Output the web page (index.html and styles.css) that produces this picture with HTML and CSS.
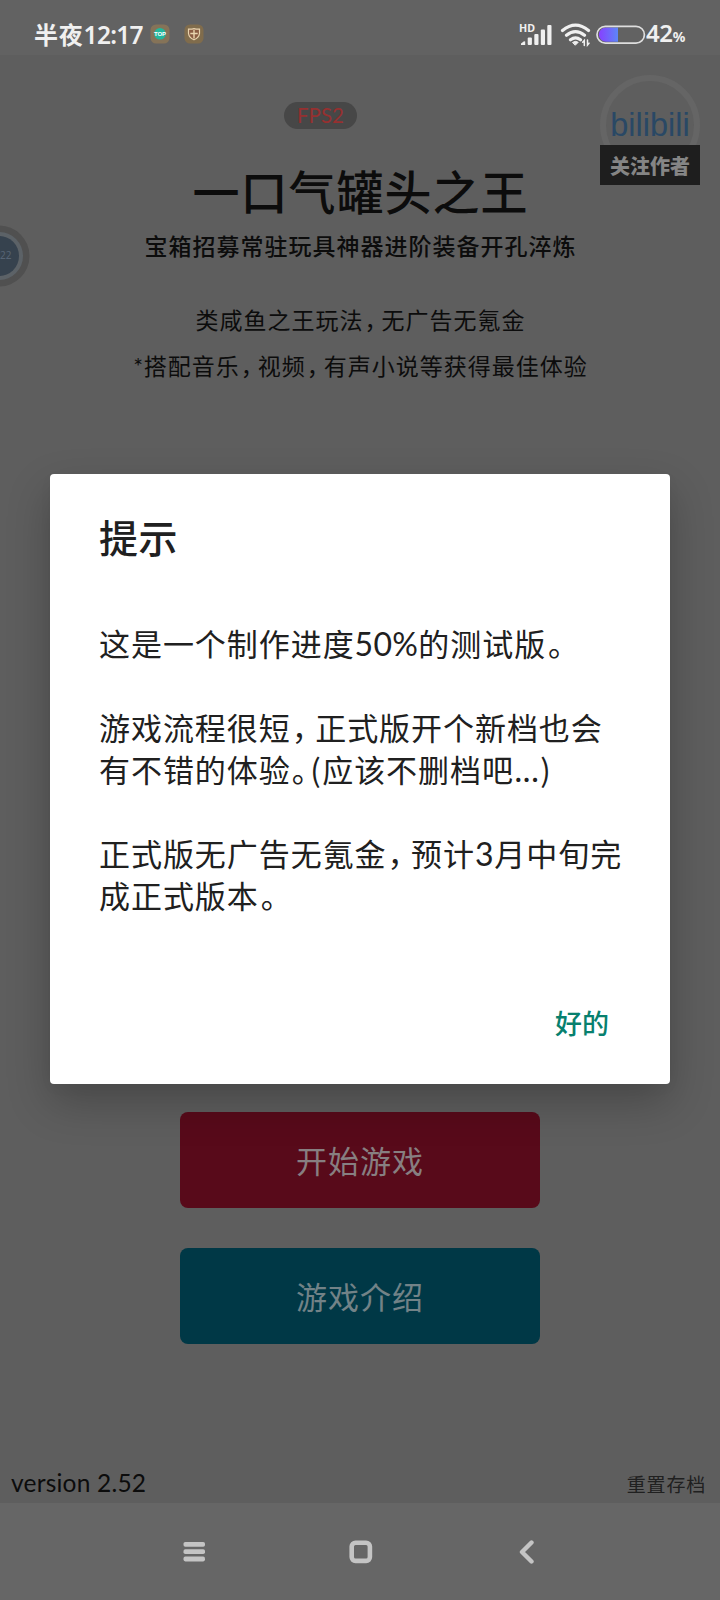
FILE: index.html
```html
<!DOCTYPE html>
<html lang="zh-CN">
<head>
<meta charset="utf-8">
<title>一口气罐头之王</title>
<link rel="stylesheet" href="styles.css">
</head>
<body>
<div class="screen">
  <header class="status">
    <span class="clock"><span class="clock-cjk">半夜</span><span class="clock-num">12:17</span></span>
    <svg class="app-icon" width="20" height="20" viewBox="0 0 20 20"><rect x=".5" y=".5" width="19" height="19" rx="5.5" fill="#857358"/><circle cx="10" cy="9.8" r="5.8" fill="#22b89c"/><text x="10" y="12.3" class="top-text" text-anchor="middle">TOP</text></svg>
    <svg class="app-icon second" width="20" height="20" viewBox="0 0 20 20"><rect x=".5" y=".5" width="19" height="19" rx="5.5" fill="#806c4c"/><path d="M4.5 5.2Q8 5.3 10 4.6Q12 5.3 15.5 5.2V9.5Q15 13.6 10 15.8Q5 13.6 4.5 9.5Z" fill="#8a5c42" stroke="#e8d3ae" stroke-width="1.2"/><path d="M10 6V14.5M6.3 9.5H13.7" stroke="#e8d3ae" stroke-width="1.4"/></svg>
    <span class="spacer"></span>
    <svg class="signal" width="34" height="28" viewBox="0 -4 34 28"><text x="0" y="9" class="hd-text" textLength="16" lengthAdjust="spacingAndGlyphs">HD</text><g fill="#f0f0f0"><path d="M2 22V20.5L5 18.2L6.2 18.5V22Z"/><rect x="8.7" y="14.5" width="4.2" height="7.5" rx="1"/><rect x="15.3" y="11" width="4.2" height="11" rx="1"/><rect x="21.8" y="6.5" width="4.2" height="15.5" rx="1"/><rect x="28.3" y="2" width="4.2" height="20" rx="1"/></g></svg>
    <svg class="wifi" width="32" height="24" viewBox="0 0 32 24" fill="none" stroke="#f0f0f0" stroke-width="3.2" stroke-linecap="round"><path d="M2.5 7.5Q15.5-3.2 28.5 7.5M6.5 12.3Q15.5 5 24.5 12.3M10.5 16.8Q15.5 13 20.5 16.8"/><path d="M12.8 19.3Q15.5 17.3 18.2 19.3L15.5 22Z" fill="#f0f0f0" stroke-width="1"/><path d="M24.3 22.5V17.5L22.7 19.3M27.5 17V22L29 20.2" stroke-width="1.5"/></svg>
    <svg class="battery" width="50" height="20" viewBox="0 0 50 20"><defs><linearGradient id="charge"><stop offset="0" stop-color="#8740ff"/><stop offset="1" stop-color="#5d86f8"/></linearGradient></defs><path d="M22 2.5H10A7 7 0 0 0 10 16.8H22Z" fill="url(#charge)"/><rect x="1" y="1.3" width="47.4" height="16.8" rx="8.4" fill="none" stroke="#dedede" stroke-width="1.7"/></svg>
    <span class="level">42<small>%</small></span>
  </header>

  <main class="game">
    <div class="fps">FPS2</div>
    <h1 class="title">一口气罐头之王</h1>
    <p class="subtitle">宝箱招募常驻玩具神器进阶装备开孔淬炼</p>
    <p class="note">类咸鱼之王玩法<i class="comma">，</i>无广告无氪金</p>
    <p class="note second-note"><i class="star">*</i>搭配音乐<i class="comma">，</i>视频<i class="comma">，</i>有声小说等获得最佳体验</p>
    <div class="actions">
      <div class="button start">开始游戏</div>
      <div class="button intro">游戏介绍</div>
    </div>
    <footer class="foot"><span class="version">version 2.52</span><span class="reset">重置存档</span></footer>

    <div class="author"><div class="author-logo">bilibili</div><div class="author-label">关注作者</div></div>
    <svg class="bubble" width="30" height="62" viewBox="0 0 30 62"><circle cx="-1" cy="31" r="30.5" fill="#505050"/><circle cx="-1" cy="31" r="24" fill="#5c6267"/><circle cx="-1" cy="31" r="20" fill="#36424e"/><text x="0" y="34" class="bubble-text">22</text></svg>
  </main>

  <nav class="nav">
    <svg width="24" height="24" viewBox="0 0 24 24" fill="#c4c4c4"><rect x="1.5" y="2" width="21.5" height="4.8" rx="1.8"/><rect x="1.5" y="9.2" width="21.5" height="4.8" rx="1.8"/><rect x="1.5" y="16.6" width="21.5" height="4.8" rx="1.8"/></svg>
    <svg width="24" height="24" viewBox="0 0 24 24"><rect x="2.7" y="2.7" width="18.2" height="18.2" rx="3.8" fill="none" stroke="#c4c4c4" stroke-width="4.6"/></svg>
    <svg width="24" height="24" viewBox="0 0 24 24"><path d="M15.5 2.5L6 12L15.5 21.5" fill="none" stroke="#c4c4c4" stroke-width="4.4" stroke-linecap="round" stroke-linejoin="round"/></svg>
  </nav>

  <section class="dialog">
    <h2 class="dialog-title">提示</h2>
    <div class="dialog-body">
      <p>这是一个制作进度<span class="num fifty">50%</span>的测试版<i class="last-stop">。</i></p>
      <p>游戏流程很短<i class="comma">，</i>正式版开个新档也会<br>有不错的体验<i class="stop">。</i><span class="paren">(</span>应该不删档吧<span class="dots">...</span><span class="paren">)</span></p>
      <p>正式版无广告无氪金<i class="comma">，</i>预计<span class="num three">3</span>月中旬完<br>成正式版本<i class="last-stop">。</i></p>
    </div>
    <div class="dialog-ok">好的</div>
  </section>
</div>
</body>
</html>
```
FILE: styles.css
```css
* { box-sizing: border-box; }
body {
  margin: 0;
  font-family: "Noto Sans CJK SC", sans-serif;
}
h1, h2, p { margin: 0; font-weight: 400; }
i { font-style: normal; }
svg { display: block; flex: none; }

.screen {
  position: relative;
  display: flex;
  flex-direction: column;
  width: 720px;
  height: 1600px;
  overflow: hidden;
  background: #5e5e5e;
}

/* status bar */
.status {
  display: flex;
  align-items: center;
  height: 55px;
  padding: 14px 33px 0 34px;
  background: #626262;
  color: #f0f0f0;
}
.clock { display: flex; align-items: baseline; width: 116px; white-space: nowrap; line-height: 30px; }
.clock-cjk { font-size: 24px; font-weight: 700; letter-spacing: .8px; }
.clock-num { font-family: "Noto Sans", sans-serif; font-size: 24.5px; font-weight: 600; letter-spacing: -.7px; }
.app-icon { margin-top: -1px; }
.second { margin-left: 14px; }
.top-text { font: 700 6px "Liberation Sans", sans-serif; fill: #fff; }
.spacer { flex: 1; }
.signal { margin-top: -4px; }
.hd-text { font: 700 10.5px "Noto Sans", sans-serif; fill: #f0f0f0; }
.wifi { margin-left: 7px; }
.battery { margin-left: 4px; }
.level { font-family: "Noto Sans", sans-serif; font-size: 24px; font-weight: 600; line-height: 30px; white-space: nowrap; letter-spacing: -.4px; width: 41px; }
.level small { font-size: 14px; font-weight: 700; }

/* game page */
.game {
  position: relative;
  flex: 1;
  display: flex;
  flex-direction: column;
  align-items: center;
  color: #0c0c0c;
}
.fps {
  width: 73px;
  height: 27px;
  margin: 47px 79px 0 0;
  border-radius: 14px;
  background: #474747;
  color: #963030;
  font: 20.5px/26px Lato, sans-serif;
  text-align: center;
}
.title {
  margin-top: 26px;
  padding-left: 1px;
  font-size: 47px;
  line-height: 70px;
  font-weight: 500;
  letter-spacing: 1px;
}
.subtitle {
  margin-top: 4px;
  padding-left: 1px;
  font-size: 23px;
  line-height: 32px;
  font-weight: 500;
  letter-spacing: 1px;
}
.note {
  margin-top: 42px;
  padding-left: 1px;
  font-size: 23px;
  line-height: 32px;
  letter-spacing: 1px;
  white-space: nowrap;
}
.note .comma { margin-left: 1px; letter-spacing: -6px; }
.star { font-family: Lato, sans-serif; letter-spacing: .6px; }
.second-note { margin-top: 14px; }
.actions {
  display: flex;
  flex-direction: column;
  gap: 40px;
  margin-top: 730px;
}
.button {
  width: 360px;
  height: 96px;
  border-radius: 8px;
  color: #877f81;
  font-size: 31px;
  line-height: 95px;
  letter-spacing: 1px;
  text-align: center;
}
.start { background: #580a1a; }
.intro { background: #003846; color: #728287; }
.foot {
  display: flex;
  justify-content: space-between;
  align-items: center;
  width: 100%;
  height: 40px;
  margin-top: auto;
  padding: 0 14px 0 11px;
}
.version { font: 24.5px/36px Lato, sans-serif; letter-spacing: .2px; }
.reset { font-size: 19px; letter-spacing: .8px; color: #202020; }

.author { position: absolute; top: 20px; right: 20px; width: 100px; }
.author-logo {
  height: 100px;
  padding-top: 27px;
  border: 6px solid #656565;
  border-radius: 50%;
  color: #294865;
  font: 32.5px/34px "Liberation Sans", sans-serif;
  text-align: center;
}
.author-label {
  height: 40px;
  margin-top: -30px;
  position: relative;
  background: #1e1e1e;
  color: #858585;
  font-size: 20px;
  font-weight: 900;
  line-height: 42px;
  text-align: center;
}
.bubble { position: absolute; left: 0; top: 170px; }
.bubble-text { font: 10px "Noto Sans", sans-serif; fill: #566474; }

/* navigation bar */
.nav {
  display: flex;
  justify-content: center;
  gap: 143px;
  height: 97px;
  padding: 37px 0 0 2px;
  background: #666;
}

/* message dialog */
.dialog {
  position: absolute;
  left: 50px;
  top: 474px;
  width: 620px;
  height: 610px;
  padding: 34px 48px 33px 49px;
  display: flex;
  flex-direction: column;
  border-radius: 4px;
  background: #fff;
  box-shadow: 0 18px 44px rgba(0, 0, 0, .24), 0 4px 14px rgba(0, 0, 0, .03);
  color: #202020;
}
.dialog-title { font-size: 39px; line-height: 56px; font-weight: 500; letter-spacing: .6px; }
.dialog-body {
  display: flex;
  flex-direction: column;
  gap: 42px;
  margin-top: 58px;
  font-size: 31px;
  line-height: 42px;
  letter-spacing: .95px;
  white-space: nowrap;
}
.dialog-body p { height: 42px; }
.dialog-body p + p { height: 84px; }
.dialog-body .comma { margin-left: 1px; letter-spacing: -7.5px; }
.num { font-family: Lato, sans-serif; line-height: 1; }
.fifty { font-size: 32px; letter-spacing: .3px; }
.three { font-size: 32px; letter-spacing: .8px; }
.stop { margin-left: 1px; letter-spacing: -13.5px; }
.last-stop { margin-left: 2px; }
.paren { margin-left: 1px; letter-spacing: 1.5px; }
.dots { letter-spacing: -.2px; }
.dialog-ok {
  margin: auto 13px 0 auto;
  color: #07806e;
  font-size: 27px;
  line-height: 56px;
  font-weight: 500;
}
```
